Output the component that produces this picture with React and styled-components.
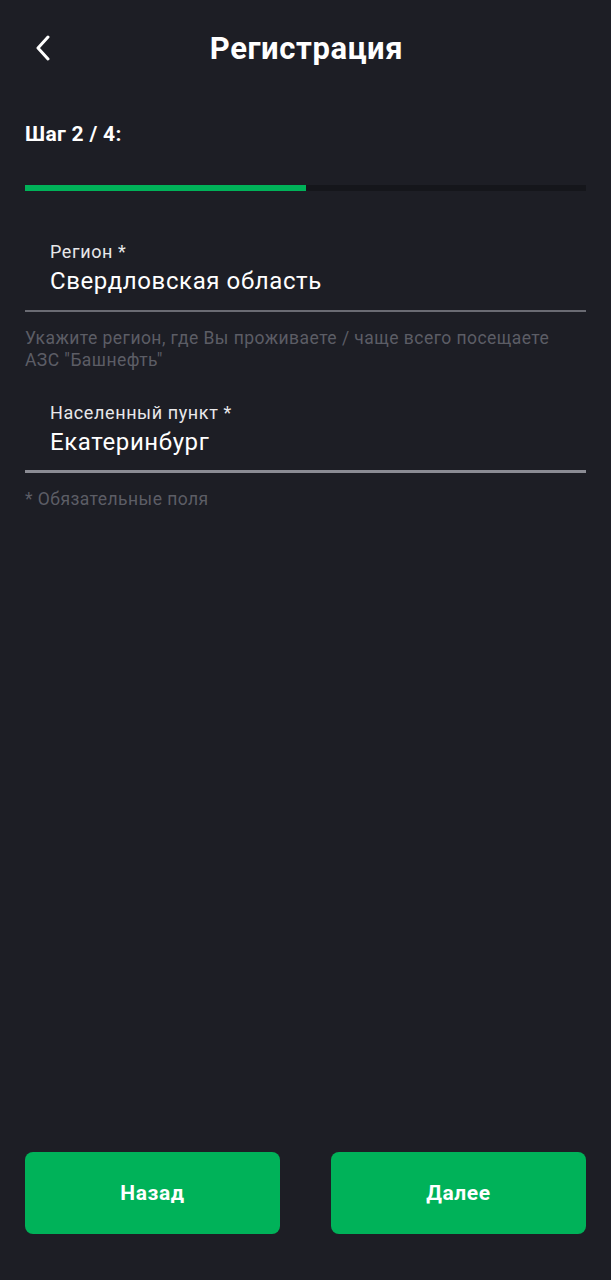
import React from 'react'
import styled, { createGlobalStyle } from 'styled-components'

const GlobalStyle = createGlobalStyle`
    body {
        margin: 0;
        background: #1d1e25;
        font-family: Roboto, "Noto Sans", "Liberation Sans", sans-serif;
    }
`

function BackIcon() {
    return (
        <svg width="16" height="26" viewBox="0 0 16 26" fill="none">
            <path d="M13 2 L3 13 L13 24" stroke="#ffffff" strokeWidth="3" strokeLinecap="round" strokeLinejoin="round"/>
        </svg>
    )
}

function Field({ label, value, active }) {
    return (
        <FieldBox active={active}>
            <Label>{label}</Label>
            <Value>{value}</Value>
        </FieldBox>
    )
}

export default function App() {
    return (
        <>
            <GlobalStyle/>
            <Screen>
                <Header>
                    <BackButton><BackIcon/></BackButton>
                    <Title>Регистрация</Title>
                </Header>
                <Step>Шаг 2 / 4:</Step>
                <Progress>
                    <ProgressFill style={{ width: `${(2 / 4) * 100}%` }}/>
                </Progress>
                <Form>
                    <Field label="Регион *" value="Свердловская область"/>
                    <Hint>Укажите регион, где Вы проживаете / чаще всего посещаете АЗС "Башнефть"</Hint>
                    <Field label="Населенный пункт *" value="Екатеринбург" active/>
                    <Hint>* Обязательные поля</Hint>
                </Form>
                <Buttons>
                    <Button>Назад</Button>
                    <Button>Далее</Button>
                </Buttons>
            </Screen>
        </>
    )
}

const Screen = styled.div`
    min-height: 1280px;
    box-sizing: border-box;
    display: flex;
    flex-direction: column;
    padding: 0 25px 46px;
    background: #1d1e25;
    color: #ffffff;
`

const Header = styled.div`
    position: relative;
    height: 96px;
    display: flex;
    align-items: center;
    justify-content: center;
`

const BackButton = styled.div`
    position: absolute;
    left: 10px;
    top: 35px;
    display: flex;
`

const Title = styled.h1`
    margin: 0 0 0 2px;
    font-size: 31px;
    font-weight: 700;
    letter-spacing: 0.6px;
`

const Step = styled.div`
    margin-top: 27px;
    font-size: 21px;
    line-height: 22px;
    font-weight: 700;
    letter-spacing: 0.3px;
`

const Progress = styled.div`
    margin-top: 40px;
    height: 6px;
    background: #15161b;
`

const ProgressFill = styled.div`
    height: 100%;
    background: #00b259;
`

const Form = styled.div`
    display: flex;
    flex-direction: column;
    margin-top: 51px;
`

const FieldBox = styled.div`
    padding: 0 0 ${p => p.active ? '14px' : '15px'} 25px;
    border-bottom: ${p => p.active ? '3px solid #8b8c94' : '2px solid #6a6b73'};
`

const Label = styled.div`
    font-size: 18px;
    line-height: 20px;
    color: #e8e8ea;
    letter-spacing: 0.6px;
`

const Value = styled.div`
    margin-top: 5px;
    font-size: 24px;
    line-height: 28px;
    color: #ffffff;
    letter-spacing: 0.6px;
`

const Hint = styled.div`
    margin: 15px 0 32px;
    font-size: 17.5px;
    line-height: 22px;
    color: #5c5d65;
    letter-spacing: 0.45px;
    &:last-child {
        margin-bottom: 0;
    }
`

const Buttons = styled.div`
    margin-top: auto;
    display: grid;
    grid-template-columns: 1fr 1fr;
    gap: 51px;
`

const Button = styled.button`
    height: 82px;
    border: none;
    border-radius: 8px;
    background: #00b259;
    color: #ffffff;
    font-family: Roboto, "Noto Sans", sans-serif;
    font-size: 21px;
    font-weight: 700;
    letter-spacing: 0.6px;
    cursor: pointer;
`
